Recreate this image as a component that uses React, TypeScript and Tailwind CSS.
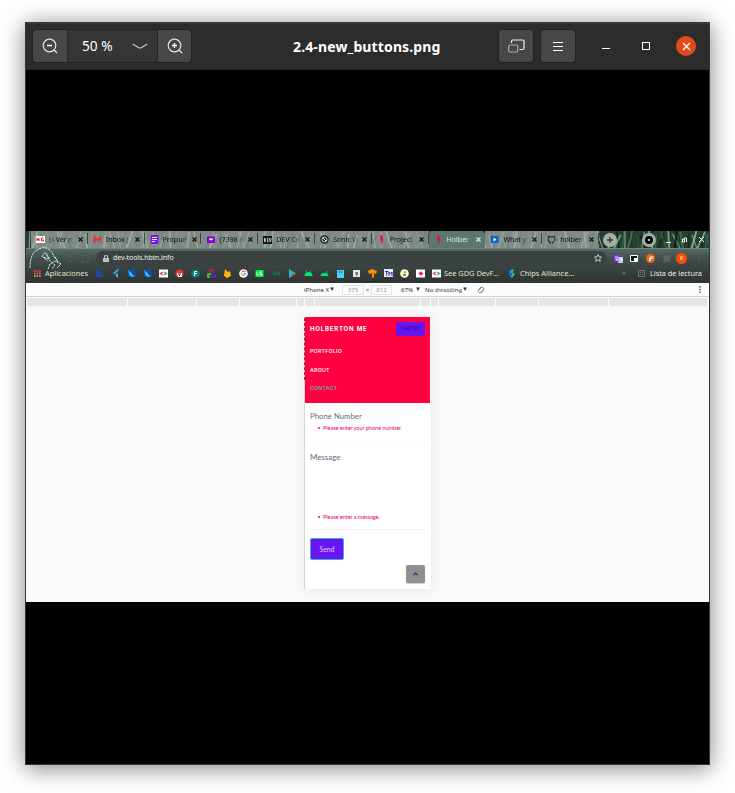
import React from "react";

const tabs = [
  { t: "▷ Ver n", k: "hg" },
  { t: "Inbox (", k: "gmail" },
  { t: "Propue", k: "form" },
  { t: "(7398 n", k: "mail" },
  { t: "DEV Co", k: "dev" },
  { t: "Sonic W", k: "sonic" },
  { t: "Project", k: "hb" },
  { t: "Holber", k: "hb" },
  { t: "What y", k: "video" },
  { t: "holber", k: "git" },
];

function Favicon({ k }: { k: string }) {
  return (
    <svg viewBox="0 0 9 9" className="h-[9px] w-[9px] shrink-0">
      {k === "hg" && (<><rect y="1" width="9" height="7" fill="#fff" /><path d="M1 3v3M3 3v3M1 4.500h2M7.500 3H5.500v3h2V4.500" stroke="#e4232c" fill="none" /></>)}
      {k === "gmail" && (<path d="M1.500 8V2.500l3 2.500 3-2.500V8" stroke="#ea2f35" strokeWidth="1.800" fill="none" />)}
      {k === "form" && (<><rect x=".5" width="8" height="9" rx="1" fill="#7417ed" /><path d="M2 2.500h5M2 4.500h5M2 6.500h3" stroke="#fff" strokeWidth=".9" /></>)}
      {k === "mail" && (<><rect x="1" y="1.500" width="8" height="6.500" fill="#8a00d4" /><path d="M3 3.500h4v1L5 5.500 3 4.500Z" fill="#fff" /></>)}
      {k === "dev" && (<><rect y="1" width="9" height="8" fill="#111" /><path d="M1.500 3v4l1-1V4Zm4 0h-1v4h1M4.500 5h1M6.300 3l1 4 1-4" stroke="#fff" strokeWidth=".7" fill="none" /></>)}
      {k === "sonic" && (<><circle cx="4.500" cy="4.500" r="4.200" fill="#111" /><circle cx="4.500" cy="4.500" r="2.500" stroke="#fff" strokeWidth=".9" fill="none" /><path d="m3 3 3 3" stroke="#fff" /></>)}
      {k === "hb" && (<path d="M3 .5h2.500v3l1 1-1 1V8.500H4V6L3 5l.5-1Z" fill="#f4063b" />)}
      {k === "video" && (<><rect x=".5" y="1" width="8" height="7" rx="1" fill="#0864c7" /><path d="m3.500 2.500 3 2-3 2Z" fill="#fff" /></>)}
      {k === "git" && (<path d="M3.300 8.500V7c-2 .3-1.400-1-2.300-1.200M3.300 7C.5 6.300.8 4 1.600 3V1.200l1.500.7h2.800l1.500-.7V3c.8 1 1.100 3.300-1.700 4v1.500" fill="none" stroke="#17201b" />)}
    </svg>
  );
}

/* Reed stalks behind the tab strip */
function Reeds() {
  const colors = ["#2d6a43", "#74b487", "#17261e", "#8fbf9d", "#3f8b56", "#101814"];
  return (
    <svg viewBox="0 0 683 17" preserveAspectRatio="none" className="absolute inset-0 h-full w-full">
      {Array.from({ length: 190 }, (_, i) => {
        const x = (i * 3.630 + ((i * 37) % 11)) % 690;
        const lean = ((i * 29) % 17) - 8;
        return <path key={i} d={`M${x} ${(i * 7) % 9 - 3}Q${x + lean / 3} 8 ${x + lean} 18`} stroke={colors[(i * 7) % 6]} strokeWidth={0.7 + ((i * 13) % 4) / 2.5} fill="none" opacity=".85" />;
      })}
    </svg>
  );
}

function Tab({ t, k, active }: { t: string; k: string; active: boolean }) {
  return (
    <div className={`relative flex h-[17px] w-[56.800px] shrink-0 items-center pl-[5px] ${active ? "rounded-t-[4px] bg-[#5d7670] text-[#e2e8e3]" : "bg-[#a6aba9]/70 text-[#0d1410]"}`}>
      <Favicon k={k} />
      <span className="ml-[4px] w-[26px] whitespace-nowrap tracking-[-0.100px] [mask-image:linear-gradient(to_right,#000_70%,transparent)]">{t}</span>
      <svg viewBox="0 0 5 5" className="ml-[3px] h-[5px] w-[5px] shrink-0"><path d="m.5.500 4 4m0-4-4 4" stroke="currentColor" strokeWidth="1.100" /></svg>
      {!active && <i className="absolute right-0 top-[2px] h-[11px] w-px bg-[#34483f]" />}
    </div>
  );
}

const bookmarks: React.ReactNode[] = [
  <path d="M1 1h4v4h3v3H1Z" fill="#164ca4" />,
  <path d="M7 0 2 4l2 1 4-4M7 4 4 6l3 3" fill="#35b7f5" />,
  <><circle cx="4.500" cy="4.500" r="4" fill="#0b50c0" /><path d="M1 1 8 8 3 7Z" fill="#41c4ff" /></>,
  <><circle cx="4.500" cy="4.500" r="4" fill="#0b50c0" /><path d="M1 1 8 8 3 7Z" fill="#41c4ff" /></>,
  <><rect y=".5" width="9" height="8" fill="#fff" /><path d="M4 3 1.500 4.500 4 6" stroke="#ea3544" strokeWidth="1.300" fill="none" /><path d="m5 3 2.500 1.500L5 6" stroke="#26a65b" strokeWidth="1.300" fill="none" /></>,
  <><circle cx="4.500" cy="4.500" r="4" fill="#e43636" /><path d="M2 4h5v4H3Z" fill="#fff" /><path d="M3 5h3M4 6.500h1" stroke="#222" /></>,
  <><circle cx="4.500" cy="4.500" r="4.300" fill="#078077" /><path d="M3.500 7V2.500h2.500M3.500 4.500H6" stroke="#fff" fill="none" /></>,
  <><path d="M3 4V1h3v3" stroke="#eb1834" strokeWidth="1.200" fill="none" /><path d="M4 5H1v3h2" stroke="#31e72b" strokeWidth="1.500" fill="none" /><path d="M5 5v3h3V5" stroke="#7120e7" strokeWidth="1.500" fill="none" /></>,
  <path d="M2 0 1 7l3 2 4-2-1-5-2 1Z" fill="#ffb600" />,
  <><circle cx="4.500" cy="4.500" r="4.300" fill="#fff" /><path d="M6.500 2.500Q4 1 2.700 3" stroke="#ee2e2e" fill="none" /><path d="M2.500 3v3" stroke="#ffb600" /><path d="M3 6q2 2 3.500-1.500H4.500" stroke="#4285f4" fill="none" /></>,
  <><rect x=".5" y="1" width="8" height="7" fill="#00ef45" /><path d="M2 3v3h2M7 3H5v2h2v1H5" stroke="#fff" strokeWidth=".8" fill="none" /></>,
  <path d="m1 2.500 1 4 2-3 1 3M5 3h3L6 5l2 1" stroke="#0a8a50" fill="none" />,
  <><path d="M1 0v9l7-4.500Z" fill="#28c765" /><path d="m1 0 4 4.500L1 9Z" fill="#1ab7f5" /><path d="m4 5 4-.5L2 9Z" fill="#ee364a" /></>,
  <><path d="M.5 7q0-4 4-4t4 4Z" fill="#00e676" /><path d="m2 1.500 1 2m4-2-1 2" stroke="#00e676" strokeWidth=".7" /></>,
  <><path d="M.5 7q0-3 4-3t4 3Z" fill="#00e676" /><path d="m8 2-2 3" stroke="#00e676" strokeWidth=".7" /></>,
  <><path d="M1 1h7v8H1Z" fill="#4ad2f5" /><path d="M3 3h1m1 0h1" stroke="#111" /></>,
  <><rect x="1" y="1" width="7" height="7" fill="#e9e9e9" /><path d="M3 3h3v3L4 7Z" fill="#777" /></>,
  <path d="m0 2 4-2 5 2-1 3-2-1v4L4 9V4L1 5Z" fill="#ff9100" />,
  <><rect width="9" height="8" fill="#ece8ff" /><path d="M1 2.500h3.500M2.700 2.500v4M5 7V3l1.500 2L8 3v4" stroke="#3a23ac" fill="none" /></>,
  <><circle cx="4.500" cy="4.500" r="4.300" fill="#fffde6" /><circle cx="5" cy="3.500" r="1.400" fill="#d4c000" /><path d="M3 6h3" stroke="#222" /></>,
  <><rect y=".5" width="9" height="8" fill="#fff" /><path d="M5.500 2.800 3.500 4.500l2 1.700M3 4.500h4" stroke="#eb1538" strokeWidth="1.400" fill="none" /></>,
  <><rect y=".5" width="9" height="8" fill="#fff" /><path d="M4 3 1.500 4.500 4 6" stroke="#e63a95" strokeWidth="1.300" fill="none" /><path d="m5 3 2.500 1.500L5 6" stroke="#26b65b" strokeWidth="1.300" fill="none" /></>,
];

const rulerSegments = ["w-[100px]", "w-[68px]", "w-[42px]", "w-[56px]", "w-[7px]", "w-[9px]", "w-[105px]", "w-[9px]", "w-[7px]", "w-[56px]", "w-[42px]", "w-[69px]", "w-[98px]"];

function TitleBar() {
  const btn = "flex items-center justify-center bg-[#474747]";
  return (
    <header className="flex h-[47px] shrink-0 items-center border-b border-t border-b-[#242424] border-t-[#3a3a3a] bg-[#2c2c2c] pb-px pl-[6px] text-white">
      <div className="flex h-[34px] w-[160px] overflow-hidden rounded-[5px] border border-[#222] bg-[#353535]">
        <div className={`${btn} h-8 w-[35px] border-r border-[#272727]`}>
          <svg className="h-4 w-4" viewBox="0 0 16 16" fill="none" stroke="#e6e6e6" strokeWidth="1.200"><circle cx="7.500" cy="7.500" r="6.300" /><path d="m12 12 3 3" /><path d="M5 7.500h5" stroke="#fff" strokeWidth="1.400" /></svg>
        </div>
        <div className="flex h-8 w-[89px] items-center pl-[14px] text-[13.700px]">
          <span className="w-[50px] whitespace-nowrap">50 %</span>
          <svg className="h-[6px] w-4" viewBox="0 0 16 6"><path d="m.7 1 6.500 4h1.600l6.500-4" fill="none" stroke="#d0d0d0" strokeWidth="1.100" /></svg>
        </div>
        <div className={`${btn} h-8 w-[34px] border-l border-[#272727]`}>
          <svg className="h-4 w-4" viewBox="0 0 16 16" fill="none" stroke="#e6e6e6" strokeWidth="1.200"><circle cx="7.500" cy="7.500" r="6.300" /><path d="m12 12 3 3" /><path d="M5 7.500h5M7.500 5v5" stroke="#fff" strokeWidth="1.400" /></svg>
        </div>
      </div>
      <h1 className="ml-[101px] w-[205px] whitespace-nowrap text-[14px] font-bold tracking-[0.130px]">2.4-new_buttons.png</h1>
      <div className={`${btn} h-[34px] w-[36px] rounded-[4px] border border-[#222]`}>
        <svg className="h-[14px] w-[17px]" viewBox="0 0 17 14" fill="none" strokeWidth="1.200"><path d="M3.500 4V2.500Q3.500 1 5 1h9.500Q16 1 16 2.500V9q0 1.500-1.500 1.500h-3" stroke="#eee" /><rect x=".7" y="6" width="9" height="7" rx="1.500" stroke="#aaa" /></svg>
      </div>
      <div className={`${btn} ml-[6px] h-[34px] w-[36px] rounded-[4px] border border-[#222]`}>
        <svg className="h-[9px] w-[10px]" viewBox="0 0 10 9"><path d="M0 .5h10M0 4.500h10M0 8.500h10" stroke="#fff" /></svg>
      </div>
      <i className="ml-[26px] mt-[5px] h-px w-2 bg-white" />
      <i className="ml-[32px] h-2 w-2 border border-white" />
      <div className="ml-[26px] flex h-5 w-5 items-center justify-center rounded-full bg-[#e24b19]">
        <svg className="h-[9px] w-[9px]" viewBox="0 0 9 9"><path d="m1 1 7 7m0-7L1 8" stroke="#fff" strokeWidth="1.400" /></svg>
      </div>
    </header>
  );
}

function Toolbar() {
  return (
    <div className="relative flex h-[18px] items-center">
      <svg className="absolute left-[3px] top-[-2px] h-[24px] w-[34px] overflow-visible" viewBox="0 0 34 24" fill="none" stroke="#c5eee3" strokeWidth="1" strokeDasharray="2.500 .7">
        <path d="M1 21Q1 5 10 2l4-2q9 2 11 10l4 4M13 10q2-5 4-4l3 6-6-2 5 4M17 7l4 5M19 22l2-5 5-3 6 3-4 4M20 13l6 5-3 4M26 10l3 5" />
      </svg>
      <span className="w-[70px]" />
      <div className="flex h-[15px] w-[511px] items-center rounded-full bg-[#394241] pl-[7px] text-[#edf1ee]">
        <svg className="h-[7px] w-[6px]" viewBox="0 0 6 7"><rect y="3" width="6" height="4" fill="#b9c1be" /><path d="M1.500 3V.7h3V3" fill="none" stroke="#b9c1be" /></svg>
        <span className="ml-[4px] text-[7px] tracking-[-0.080px]">dev-tools.hbtn.info</span>
        <svg className="ml-auto mr-[5px] h-2 w-2" viewBox="0 0 16 16"><path d="m8 1 2 4.500 5 .5-3.700 3.300L12.500 15 8 12l-4.500 3 1.200-5.700L1 6l5-.5Z" fill="none" stroke="#d5dcda" strokeWidth="1.700" /></svg>
      </div>
      <svg className="ml-[7px] h-[9px] w-[9px]" viewBox="0 0 9 9"><path d="M0 1h6v7H0Z" fill="#7534f3" /><path d="M5 3h4v6H4Z" fill="#c9c5ed" /><path d="M1 3h3v3H2V4M6 5h2v2" stroke="#fff" fill="none" strokeWidth=".8" /></svg>
      <svg className="ml-[7px] h-[7px] w-[8px]" viewBox="0 0 8 7"><path d="M.5.500h7v6h-7Z" fill="#111" stroke="#fff" /><path d="M4 3h3v3H4Z" fill="#fff" /></svg>
      <svg className="ml-[8px] h-[9px] w-[9px]" viewBox="0 0 9 9"><circle cx="4.500" cy="4.500" r="4.500" fill="#f56410" /><path d="M3 7q2-1 1.500-4h3M3 4.500h3.500" fill="none" stroke="#fff" strokeWidth="1.200" /></svg>
      <svg className="ml-[8px] h-[8px] w-[8px]" viewBox="0 0 8 8"><path d="M0 2h2q1-3 3 0h2v2q2 1 0 2v2H5q-1-2-2 0H0V6q2-1 0-2Z" fill="#5a6264" /></svg>
      <div className="ml-[5px] flex h-[11px] w-[11px] items-center justify-center rounded-full bg-[#ff4c09] text-[6px] text-white">K</div>
      <svg className="ml-[11px] h-[9px] w-[2px]" viewBox="0 0 2 9"><path d="M1 0v9" stroke="#66716e" strokeDasharray="1 2" /></svg>
      <svg className="absolute left-[38px] top-[5px] h-[9px] w-[26px]" viewBox="0 0 26 9" fill="none" stroke="#52605b" strokeWidth=".9"><path d="M8 2a3.400 3.400 0 1 0 0 4M8 0v3H5M17 4l4-3 4 3M18 4v4h6V4" /></svg>
    </div>
  );
}

function BookmarkBar() {
  return (
    <div className="flex h-[16px] items-center whitespace-nowrap pb-[3px] text-[7.500px] text-[#e0e2c8]">
      <svg className="ml-[8px] h-[7px] w-[7px] shrink-0" viewBox="0 0 7 7"><path d="M0 1h7" stroke="#ff3b37" strokeWidth="1.700" strokeDasharray="1.700 .8" /><path d="M0 3.500h7" stroke="#ff5a5f" strokeWidth="1.700" strokeDasharray="1.700 .8" /><path d="M0 6h7" stroke="#e6b42f" strokeWidth="1.700" strokeDasharray="1.700 .8" /></svg>
      <span className="ml-[4px] w-[50px] shrink-0 text-[7.400px]">Aplicaciones</span>
      <div className="flex w-[346px] shrink-0 justify-between">
        {bookmarks.map((b, i) => <svg key={i} className="h-[9px] w-[9px]" viewBox="0 0 9 9">{b}</svg>)}
      </div>
      <span className="ml-[3px] w-[64px] shrink-0 text-[7.400px]">See GDG DevF…</span>
      <svg className="h-[9px] w-[8px] shrink-0" viewBox="0 0 9 9"><path d="M1 1h4L3 4.500 6 8H2" fill="#0979ff" /><path d="M4 0h3L5 3l3 2-3 4H3l2-4-2-2Z" fill="#22c6a0" /></svg>
      <span className="ml-[4px] w-[102px] shrink-0 text-[7.450px]">Chips Alliance…</span>
      <span className="w-[16px] text-[7px] text-[#7b8585]">»</span>
      <svg className="h-[7px] w-[7px] shrink-0" viewBox="0 0 7 7"><path d="M.5.500h6v6h-6ZM2 2.500h1m1 0h1m-3 2h1m1 0h1" fill="none" stroke="#87908f" strokeWidth=".7" /></svg>
      <span className="ml-[5px] text-[7.300px] text-[#ecefeb]">Lista de lectura</span>
    </div>
  );
}

function DeviceBar() {
  return (
    <div className="flex h-[14px] items-center whitespace-nowrap border-b border-[#cfcfcf] bg-[#fcfcfc] pl-[278px] text-[6.100px] text-[#333]">
      <span className="w-[25px]">iPhone X</span>
      <span className="w-[13px] text-[6px]">▼</span>
      <span className="flex h-[10px] w-[22px] items-center justify-center border border-[#e4e4e4] text-[#999]">375</span>
      <span className="w-[7px] text-center text-[#555]">×</span>
      <span className="flex h-[10px] w-[21px] items-center justify-center border border-[#e4e4e4] text-[#999]">812</span>
      <span className="ml-[9px] w-[14px]">67%</span><span className="w-[10px] text-[6px]">▼</span>
      <span className="w-[37px]">No throttling</span><span className="w-[15px] text-[6px]">▼</span>
      <svg className="h-[8px] w-[8px]" viewBox="0 0 8 8" fill="none" stroke="#777" strokeWidth=".8"><rect x="2.500" y="1" width="3" height="6" transform="rotate(45 4 4)" /><path d="M1 4 4 1M4 7l3-3" /></svg>
      <svg className="ml-auto mr-[8px] h-[7px] w-[2px]" viewBox="0 0 2 7"><path d="M1 0v7" stroke="#555" strokeWidth="1.500" strokeDasharray="1.500 1.200" /></svg>
    </div>
  );
}

function PhonePage() {
  return (
    <main className="relative ml-[279px] mt-[11px] flex h-[272px] w-[126px] flex-col bg-white shadow-[0_1px_12px_rgba(0,0,0,.07),-1px_0_0_#ddd]">
      <i className="absolute -left-px top-px h-[62px] border-l border-dashed border-[#8d3046]" />
      <section className="h-[86px] w-[125px] bg-[#ff0040] pl-[5px] font-['Inter',sans-serif] text-[5.300px] font-semibold text-[#ffe8ee]">
        <div className="flex h-[24px] items-center">
          <strong className="w-[86px] whitespace-nowrap text-[6.100px] font-bold tracking-[0.760px] text-white">HOLBERTON ME</strong>
          <button className="h-[14px] w-[29px] whitespace-nowrap rounded-[2px] bg-[#6516f0] text-[4.200px] font-medium tracking-[0.200px] text-[#350c97]">HIRE ME</button>
        </div>
        <nav className="flex flex-col tracking-[0.200px]">
          <a className="h-[18.500px] pt-[6px] leading-[8px]">PORTFOLIO</a>
          <a className="h-[18.500px] pt-[6px] leading-[8px]">ABOUT</a>
          <a className="h-[18.500px] pt-[6px] leading-[8px] text-[#6fa9b2]">CONTACT</a>
        </nav>
      </section>
      <form className="flex flex-col px-[5px] font-['Lato',sans-serif] text-[#606b7c]">
        <label className="mt-[8px] h-[11px] text-[7.700px] leading-[11px] tracking-[0.060px]">Phone Number</label>
        <p className="ml-[8px] flex h-[12px] items-center whitespace-nowrap text-[5.700px] leading-[12px] tracking-[-0.100px] text-[#ed0074]"><i className="mr-[3px] h-[2px] w-[2px] rounded-full bg-[#ed0074]" />Please enter your phone number.</p>
        <hr className="mt-[6px] border-[#fafafa]" />
        <label className="mt-[11px] h-[11px] text-[7.900px] leading-[11px]">Message</label>
        <p className="ml-[8px] mt-[48px] flex h-[12px] items-center whitespace-nowrap text-[5.700px] tracking-[-0.100px] text-[#ed0074]"><i className="mr-[3px] h-[2px] w-[2px] rounded-full bg-[#ed0074]" />Please enter a message.</p>
        <hr className="mt-[6px] w-[115px] border-[#efefef]" />
        <button className="mt-[8px] h-[22px] w-[34px] rounded-[2px] border border-[#2aafe0] bg-[#6915f3] text-[6.800px] text-[#d5ceff]">Send</button>
        <button className="ml-[96px] mt-[5px] flex h-[18px] w-[19px] items-center justify-center rounded-[2px] bg-[#909090] shadow-[0_1px_1px_#ccc]">
          <svg className="h-[4px] w-[5px]" viewBox="0 0 5 4"><path d="m.5 3 2-2 2 2" fill="none" stroke="#51129a" strokeWidth="1.100" /></svg>
        </button>
      </form>
    </main>
  );
}

export default function App() {
  return (
    <div className="h-[793px] w-[735px] overflow-hidden bg-white pl-[25px] pt-[22px] font-['Noto_Sans',sans-serif]">
      <div className="flex h-[743px] w-[685px] flex-col border border-[#363636] bg-black shadow-[0_3px_22px_rgba(0,0,0,.5)]">
        <TitleBar />
        <div className="mt-[161px] h-[371px] bg-[#f9f9f9]">
          <div className="relative flex h-[17px] items-center overflow-hidden bg-[#293e32] pl-[5px] text-[7.200px]">
            <Reeds />
            {tabs.map((tab, i) => <Tab key={i} t={tab.t} k={tab.k} active={i === 7} />)}
            <span className="relative ml-[4px] flex h-[14px] w-[14px] shrink-0 items-center justify-center rounded-full bg-[#a1afa7]"><svg className="h-[6px] w-[6px]" viewBox="0 0 6 6"><path d="M0 3h6M3 0v6" stroke="#111" /></svg></span>
            <span className="relative ml-[25px] flex h-[14px] w-[14px] shrink-0 items-center justify-center rounded-full bg-[#a1afa7]"><i className="h-2 w-2 rounded-full border-[3px] border-[#050505] bg-white" /></span>
            <i className="relative ml-[10px] mt-[6px] h-px w-[5px] shrink-0 bg-white" />
            <svg className="relative ml-[11px] h-[6px] w-[5px] shrink-0" viewBox="0 0 5 6"><path d="M.5 2v3h2V2Zm1.500-1h2.500v4" fill="none" stroke="#fff" /></svg>
            <svg className="relative ml-[12px] h-[5px] w-[5px] shrink-0" viewBox="0 0 5 5"><path d="m0 0 5 5m0-5L0 5" stroke="#fff" /></svg>
          </div>
          <div className="h-[35px] border-t border-[#708780] bg-[linear-gradient(#566762_0,#424e4b_28%,#3a4341_55%,#2d3331_100%)]">
            <Toolbar />
            <BookmarkBar />
          </div>
          <DeviceBar />
          <div className="flex h-[9px] gap-px bg-[#fcfcfc] pl-px pt-px">
            {rulerSegments.map((w, i) => <i key={i} className={`${w} h-[8px] shrink-0 bg-[#e4e4e4]`} />)}
          </div>
          <PhonePage />
        </div>
      </div>
    </div>
  );
}
